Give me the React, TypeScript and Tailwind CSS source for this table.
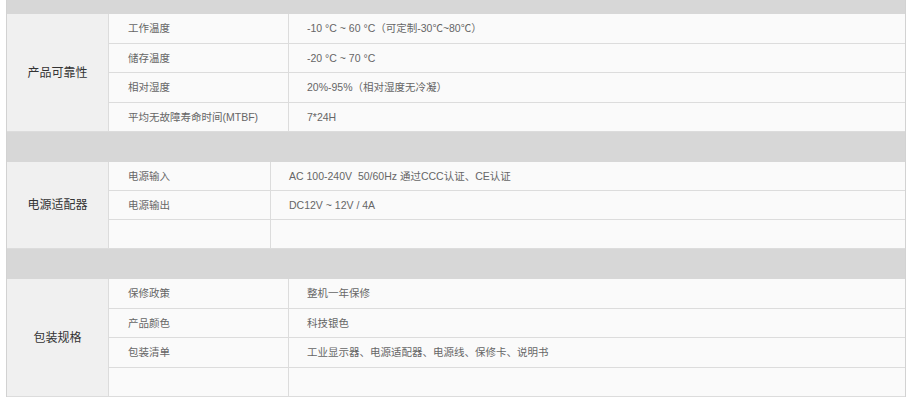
import React from 'react';

type Section = {
  title: string;
  labelWidth: string;
  rowHeight: string;
  rows: [string, string][];
};

const sections: Section[] = [
  {
    title: '产品可靠性',
    labelWidth: 'w-[180px]',
    rowHeight: 'h-[29.5px]',
    rows: [
      ['工作温度', '-10 °C ~ 60 °C（可定制-30℃~80℃）'],
      ['储存温度', '-20 °C ~ 70 °C'],
      ['相对湿度', '20%-95%（相对湿度无冷凝）'],
      ['平均无故障寿命时间(MTBF)', '7*24H'],
    ],
  },
  {
    title: '电源适配器',
    labelWidth: 'w-[162px]',
    rowHeight: 'h-[29px]',
    rows: [
      ['电源输入', 'AC 100-240V\u00a0\u00a050/60Hz 通过CCC认证、CE认证'],
      ['电源输出', 'DC12V ~ 12V / 4A'],
      ['', ''],
    ],
  },
  {
    title: '包装规格',
    labelWidth: 'w-[180px]',
    rowHeight: 'h-[29.5px]',
    rows: [
      ['保修政策', '整机一年保修'],
      ['产品颜色', '科技银色'],
      ['包装清单', '工业显示器、电源适配器、电源线、保修卡、说明书'],
      ['', ''],
    ],
  },
];

const SpecSection: React.FC<{ s: Section }> = ({ s }) => (
  <>
    <div className="h-[30px] bg-[#d7d7d7]" />
    <div className="flex">
      <div className="w-[102px] shrink-0 flex items-center justify-center bg-[#f0f0f0] border-r border-b border-[#dcdcdc] text-[12px] text-[#333]">
        {s.title}
      </div>
      <div className="flex-1 flex flex-col">
        {s.rows.map(([k, v], i) => (
          <div key={i} className={`flex ${s.rowHeight} bg-[#fafafa] border-b border-[#dcdcdc]`}>
            <div className={`${s.labelWidth} shrink-0 flex items-center pl-[19px] border-r border-[#dcdcdc] text-[#666]`}>
              {k}
            </div>
            <div className="flex-1 flex items-center pl-[18px] text-[#666]">{v}</div>
          </div>
        ))}
      </div>
    </div>
  </>
);

export default function App() {
  return (
    <div className="w-[916px] h-[405px] bg-white overflow-hidden font-['Liberation_Sans','Noto_Sans_CJK_SC',sans-serif] text-[10.5px] leading-none">
      <div className="ml-[6px] w-[900px] border-x border-[#d2d2d2] -mt-[16px]">
        {sections.map((s) => (
          <SpecSection key={s.title} s={s} />
        ))}
      </div>
    </div>
  );
}
